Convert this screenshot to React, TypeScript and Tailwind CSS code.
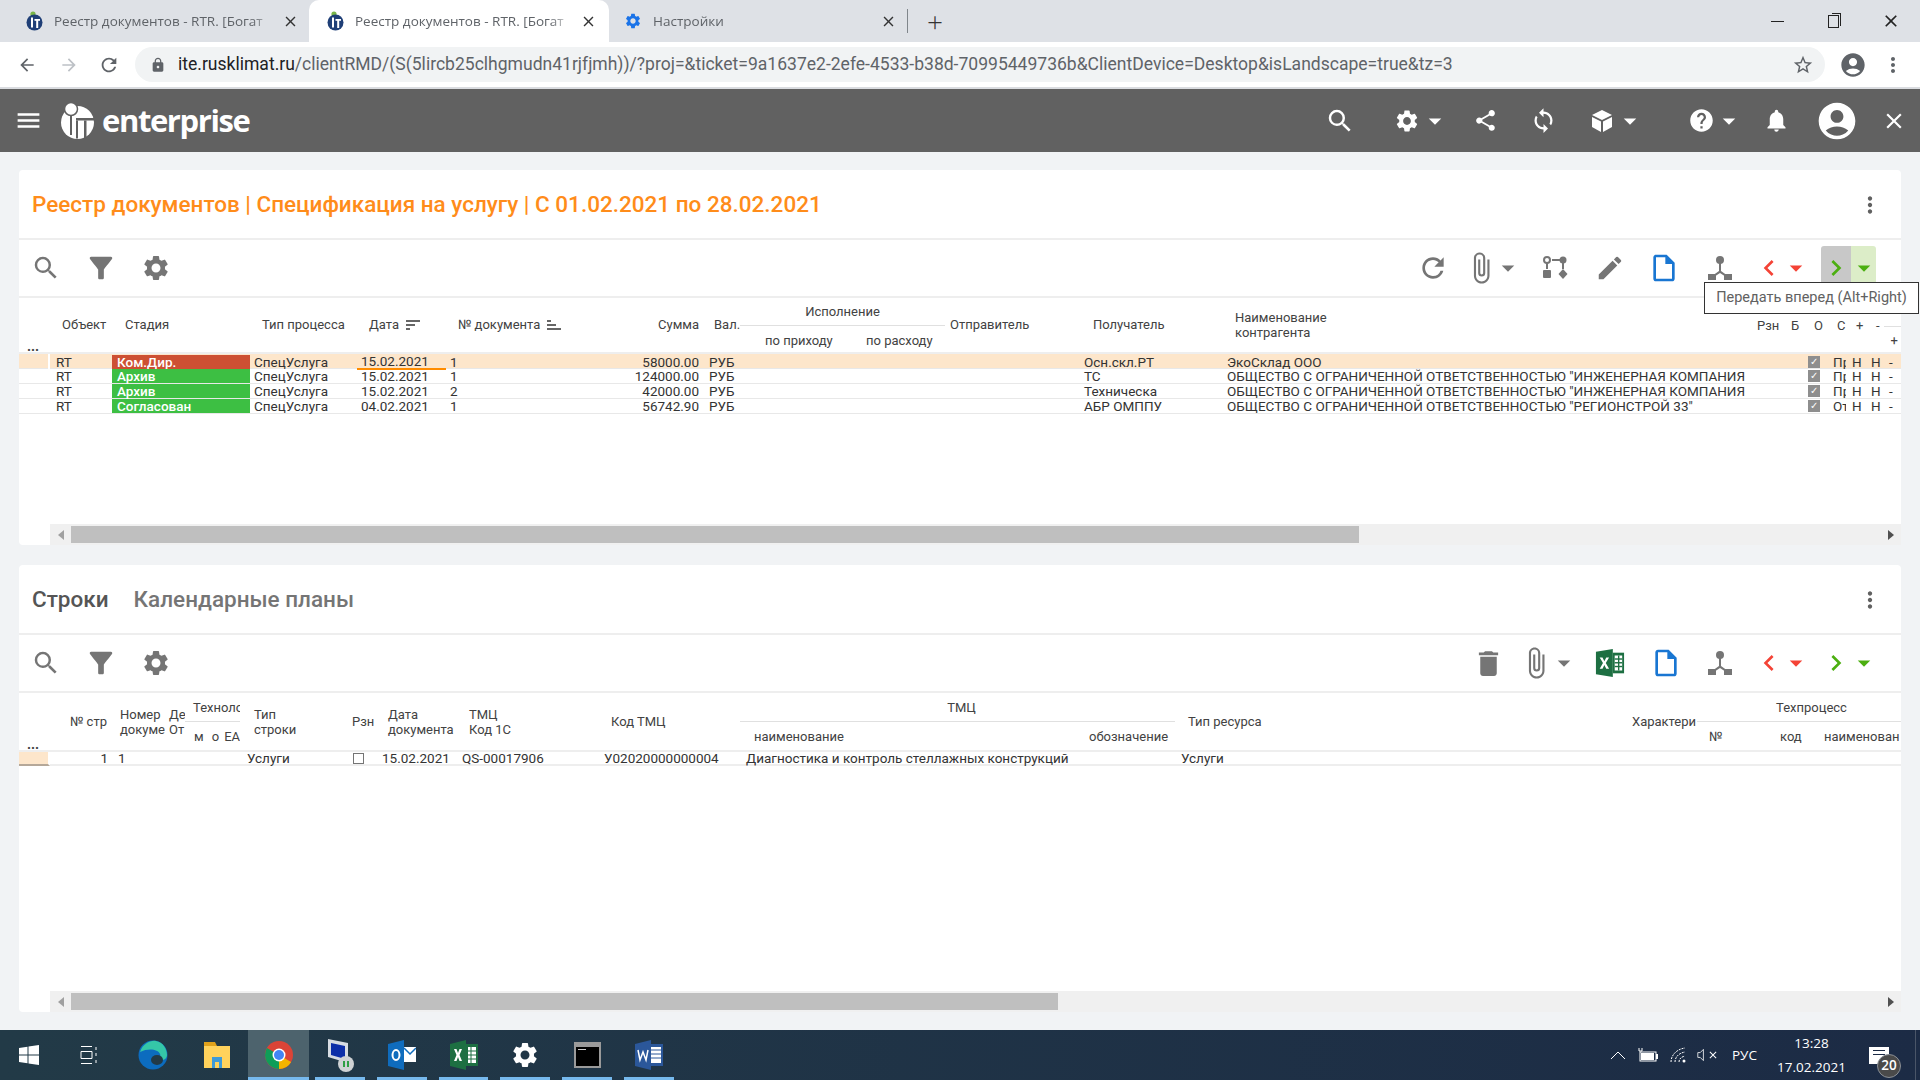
import type { ReactNode } from "react";
import {
  MdAccountCircle,
  MdArrowBack,
  MdArrowDropDown,
  MdArrowForward,
  MdAttachFile,
  MdChevronLeft,
  MdChevronRight,
  MdClose,
  MdDelete,
  MdEdit,
  MdFilterAlt,
  MdHelp,
  MdLock,
  MdMenu,
  MdMoreVert,
  MdNotifications,
  MdOutlineInsertDriveFile,
  MdRefresh,
  MdSearch,
  MdSettings,
  MdShare,
  MdStarBorder,
  MdSync,
} from "react-icons/md";

function Favicon() {
  return (
    <svg width="17" height="20" viewBox="0 0 17 20" className="shrink-0">
      <circle cx="7" cy="3" r="2.6" fill="#7ab648" />
      <ellipse cx="8.5" cy="11.5" rx="8" ry="8" fill="#1f3f77" />
      <rect x="5" y="6.5" width="2" height="10" fill="#fff" />
      <rect x="8.5" y="8" width="5.5" height="1.8" fill="#fff" />
      <rect x="10.2" y="8" width="2" height="9" fill="#fff" />
    </svg>
  );
}

function Tab({
  active,
  icon,
  title,
  className,
}: {
  active?: boolean;
  icon: ReactNode;
  title: string;
  className: string;
}) {
  return (
    <div
      className={`flex h-[42px] items-center ${className} ${
        active ? "rounded-t-[10px] bg-white" : ""
      }`}
    >
      {icon}
      <div className="ml-[11px] flex-1 overflow-hidden whitespace-nowrap text-[13.5px] text-[#5f6368] [mask-image:linear-gradient(to_right,black_90%,transparent)]">
        {title}
      </div>
      <MdClose className="ml-[8px] shrink-0 text-[#333]" size={17} />
    </div>
  );
}

function BrowserChrome() {
  return (
    <div className="shrink-0 font-['Open_Sans',sans-serif]">
      <div className="flex h-[42px] items-center bg-[#dee1e6]">
        <Tab
          className="ml-[26px] mr-[10px] w-[273px]"
          icon={<Favicon />}
          title="Реестр документов - RTR. [Богат"
        />
        <Tab
          active
          className="w-[300px] pl-[18px] pr-[12px]"
          icon={<Favicon />}
          title="Реестр документов - RTR. [Богат"
        />
        <Tab
          className="ml-[15px] w-[273px]"
          icon={<MdSettings className="shrink-0 text-[#1a73e8]" size={18} />}
          title="Настройки"
        />
        <div className="ml-[10px] h-[24px] w-px bg-[#80868b]" />
        <span className="ml-[19px] text-[28px] font-light leading-none text-[#333]">+</span>
        <div className="ml-auto flex items-center pr-[19px] text-[#222]">
          <div className="h-px w-[13px] bg-[#222]" />
          <div className="relative ml-[44px] h-[13px] w-[11px] border border-[#222]">
            <div className="absolute -right-[3px] -top-[3px] h-[13px] w-[9px] border-r border-t border-[#222]" />
          </div>
          <MdClose className="ml-[42px]" size={20} />
        </div>
      </div>
      <div className="flex h-[47px] items-center border-b-2 border-[#dadce0] bg-white">
        <MdArrowBack className="ml-[17px] shrink-0 text-[#5f6368]" size={20} />
        <MdArrowForward className="ml-[22px] shrink-0 text-[#bdc1c6]" size={20} />
        <MdRefresh className="ml-[19px] shrink-0 text-[#5f6368]" size={22} />
        <div className="ml-[15px] flex h-[35px] flex-1 items-center rounded-full bg-[#f1f3f4] font-['Roboto',sans-serif] text-[17.55px] text-[#5f6368]">
          <MdLock className="ml-[15px] shrink-0 text-[#5f6368]" size={16} />
          <div className="ml-[12px] flex-1 whitespace-nowrap">
            <span className="text-[#202124]">ite.rusklimat.ru</span>
            /clientRMD/(S(5lircb25clhgmudn41rjfjmh))/?proj=&amp;ticket=9a1637e2-2efe-4533-b38d-70995449736b&amp;ClientDevice=Desktop&amp;isLandscape=true&amp;tz=3
          </div>
          <MdStarBorder className="mr-[11px] shrink-0 text-[#5f6368]" size={22} />
        </div>
        <MdAccountCircle className="ml-[14px] shrink-0 text-[#5f6368]" size={28} />
        <MdMoreVert className="ml-[14px] mr-[15px] shrink-0 text-[#5f6368]" size={24} />
      </div>
    </div>
  );
}

function Caret({ className = "text-white" }: { className?: string }) {
  return (
    <div className="flex w-6 items-center justify-center">
      <MdArrowDropDown className={`shrink-0 ${className}`} size={30} />
    </div>
  );
}

function Box({ children, className = "" }: { children: ReactNode; className?: string }) {
  return (
    <div className={`flex w-6 items-center justify-center [&>svg]:shrink-0 ${className}`}>
      {children}
    </div>
  );
}

function CubeIcon() {
  return (
    <svg width="22" height="24" viewBox="0 0 22 24" fill="#fff">
      <path d="M11 1 21 6 11 11 1 6Z" />
      <path d="M1 8 10 12.5V23L1 18Z" />
      <path d="M21 8 12 12.5V23L21 18Z" />
    </svg>
  );
}

function HeaderBar() {
  return (
    <div className="flex h-[63px] shrink-0 items-center bg-[#616161] text-white">
      <MdMenu className="ml-[14px]" size={29} />
      <svg width="34" height="36" viewBox="0 0 34 36" className="ml-[18px]">
        <circle cx="16.500" cy="19.500" r="16.500" fill="#fff" />
        <circle cx="10" cy="6" r="6.500" fill="#fff" stroke="#616161" strokeWidth="1.500" />
        <rect x="9" y="13" width="2" height="19" fill="#616161" />
        <rect x="15" y="15" width="19" height="2.500" fill="#616161" />
        <rect x="15" y="17.500" width="2" height="18" fill="#616161" />
        <rect x="23" y="17.500" width="2.500" height="18" fill="#616161" />
      </svg>
      <span className="ml-[7px] font-['Open_Sans',sans-serif] text-[31px] font-bold leading-none tracking-[-1.4px]">
        enterprise
      </span>
      <div className="ml-auto flex items-center pr-[14px]">
        <Box>
          <MdSearch size={30} />
        </Box>
        <Box className="ml-[43px]">
          <MdSettings size={26} />
        </Box>
        <div className="ml-[4px]">
          <Caret />
        </div>
        <Box className="ml-[26px]">
          <MdShare size={25} />
        </Box>
        <Box className="ml-[34px]">
          <MdSync size={27} />
        </Box>
        <Box className="ml-[35px]">
          <CubeIcon />
        </Box>
        <div className="ml-[4px]">
          <Caret />
        </div>
        <Box className="ml-[47px]">
          <MdHelp size={27} />
        </Box>
        <div className="ml-[4px]">
          <Caret />
        </div>
        <Box className="ml-[23px]">
          <MdNotifications size={27} />
        </Box>
        <MdAccountCircle className="ml-[27px] shrink-0" size={44} />
        <Box className="ml-[23px]">
          <MdClose size={26} />
        </Box>
      </div>
    </div>
  );
}

function RouteIcon() {
  return (
    <svg width="26" height="24" viewBox="0 0 26 24" fill="#757575">
      <circle cx="5" cy="4" r="3" fill="none" stroke="#757575" strokeWidth="2" />
      <rect x="4" y="7" width="2" height="6" />
      <rect x="1" y="14" width="8" height="8" rx="1" />
      <circle cx="21" cy="4" r="3.5" />
      <rect x="10" y="3" width="9" height="2" />
      <rect x="20" y="7" width="2" height="6" />
      <path d="M21 13 25.5 18 21 23 16.5 18Z" />
    </svg>
  );
}

function HubIcon() {
  return (
    <svg width="26" height="26" viewBox="0 0 26 26" fill="#757575">
      <circle cx="13" cy="5" r="4" />
      <path d="M12 8h2v8l7 5-1.2 1.6L13 18l-6.8 4.6L5 21l7-5Z" />
      <rect x="1" y="19" width="8" height="6" />
      <rect x="17" y="19" width="8" height="6" />
    </svg>
  );
}

function ExcelIcon() {
  return (
    <svg width="30" height="30" viewBox="0 0 32 32">
      <path d="M1 4 19 1V31L1 28Z" fill="#1d6f42" />
      <rect x="19" y="5" width="12" height="22" fill="#1d6f42" />
      <rect x="21" y="8" width="8" height="16" fill="#fff" />
      <rect x="21" y="11" width="8" height="1.5" fill="#1d6f42" />
      <rect x="21" y="15" width="8" height="1.5" fill="#1d6f42" />
      <rect x="21" y="19" width="8" height="1.5" fill="#1d6f42" />
      <rect x="24.5" y="8" width="1.5" height="16" fill="#1d6f42" />
      <path d="M5 10h3l2 4 2-4h3l-3.5 6 3.5 6h-3l-2-4-2 4H5l3.5-6Z" fill="#fff" />
    </svg>
  );
}

function LeftTools() {
  return (
    <div className="-ml-px flex items-center text-[#757575]">
      <div className="flex w-[55px] justify-center">
        <MdSearch size={30} />
      </div>
      <div className="flex w-[55px] justify-center">
        <MdFilterAlt size={34} />
      </div>
      <div className="flex w-[55px] justify-center">
        <MdSettings size={30} />
      </div>
    </div>
  );
}

function StepTools({ hot }: { hot?: boolean }) {
  return (
    <>
      <Box className="ml-[25px]">
        <MdChevronLeft className="text-[#f44336]" size={32} />
      </Box>
      <div className="ml-[3px]">
        <Caret className="text-[#f44336]" />
      </div>
      <div
        className={`ml-[13px] flex h-[44px] w-[30px] items-center justify-center rounded-tl-[3px] ${
          hot ? "bg-[#c8c8c8]" : ""
        }`}
      >
        <MdChevronRight className="shrink-0 text-[#4caf10]" size={32} />
      </div>
      <div
        className={`flex h-[44px] w-[25px] items-center justify-center rounded-tr-[3px] ${
          hot ? "bg-[#dcedc8]" : ""
        }`}
      >
        <MdArrowDropDown className="shrink-0 text-[#4caf10]" size={30} />
      </div>
    </>
  );
}

function TopToolbar() {
  return (
    <div className="relative flex h-[58px] shrink-0 items-center justify-between border-b-2 border-[#eeeeee] pr-[25px]">
      <LeftTools />
      <div className="flex items-center text-[#757575]">
        <Box>
          <MdRefresh size={32} />
        </Box>
        <Box className="ml-[24px]">
          <MdAttachFile size={34} />
        </Box>
        <div className="ml-[3px]">
          <Caret className="text-[#757575]" />
        </div>
        <Box className="ml-[23px]">
          <RouteIcon />
        </Box>
        <Box className="ml-[31px]">
          <MdEdit size={30} />
        </Box>
        <Box className="ml-[30px]">
          <MdOutlineInsertDriveFile className="text-[#1976d2]" size={32} />
        </Box>
        <Box className="ml-[32px]">
          <HubIcon />
        </Box>
        <StepTools hot />
      </div>
      <div className="absolute -right-[18px] top-[42px] z-10 flex h-[32px] w-[215px] items-center justify-center whitespace-nowrap border border-[#333] bg-white text-[14.5px] text-[#616161]">
        Передать вперед (Alt+Right)
      </div>
    </div>
  );
}

function BottomToolbar() {
  return (
    <div className="flex h-[58px] shrink-0 items-center justify-between border-b-2 border-[#eeeeee] pr-[25px]">
      <LeftTools />
      <div className="flex items-center text-[#757575]">
        <Box>
          <MdDelete size={33} />
        </Box>
        <Box className="ml-[24px]">
          <MdAttachFile size={34} />
        </Box>
        <div className="ml-[4px]">
          <Caret className="text-[#757575]" />
        </div>
        <Box className="ml-[22px]">
          <ExcelIcon />
        </Box>
        <Box className="ml-[32px]">
          <MdOutlineInsertDriveFile className="text-[#1976d2]" size={32} />
        </Box>
        <Box className="ml-[30px]">
          <HubIcon />
        </Box>
        <StepTools />
      </div>
    </div>
  );
}

function SortIcon({ flip }: { flip?: boolean }) {
  return (
    <svg width="14" height="10" viewBox="0 0 14 10" fill="#666" className={`ml-[7px] shrink-0 ${flip ? "-scale-y-100" : ""}`}>
      <rect x="0" y="0" width="14" height="2" />
      <rect x="0" y="4" width="9" height="2" />
      <rect x="0" y="8" width="4" height="2" />
    </svg>
  );
}

const topHeadCols =
  "grid-cols-[31px_62px_138px_107px_89px_114px_144px_36px_100px_105px_135px_142px_528px_151px]";
const topRowCols =
  "grid-cols-[31px_62px_138px_107px_89px_114px_144px_36px_100px_105px_135px_142px_583px_25px_18px_19px_18px_16px]";

const docs = [
  { stage: "Ком.Дир.", color: "bg-[#cd5033]", date: "15.02.2021", no: "1", sum: "58000.00", to: "Осн.скл.РТ", name: "ЭкоСклад ООО", state: "Пр", sel: true },
  { stage: "Архив", color: "bg-[#3dbf43]", date: "15.02.2021", no: "1", sum: "124000.00", to: "ТС", name: 'ОБЩЕСТВО С ОГРАНИЧЕННОЙ ОТВЕТСТВЕННОСТЬЮ "ИНЖЕНЕРНАЯ КОМПАНИЯ', state: "Пр" },
  { stage: "Архив", color: "bg-[#3dbf43]", date: "15.02.2021", no: "2", sum: "42000.00", to: "Техническа", name: 'ОБЩЕСТВО С ОГРАНИЧЕННОЙ ОТВЕТСТВЕННОСТЬЮ "ИНЖЕНЕРНАЯ КОМПАНИЯ', state: "Пр" },
  { stage: "Согласован", color: "bg-[#3dbf43]", date: "04.02.2021", no: "1", sum: "56742.90", to: "АБР ОМППУ", name: 'ОБЩЕСТВО С ОГРАНИЧЕННОЙ ОТВЕТСТВЕННОСТЬЮ "РЕГИОНСТРОЙ 33"', state: "От" },
];

function Checked() {
  return (
    <div className="ml-[3px] flex h-[12px] w-[12px] items-center justify-center bg-[#8e8e8e] text-[10px] leading-none text-white">
      ✓
    </div>
  );
}

function TopTable() {
  return (
    <div className="flex-1 overflow-hidden">
      <div className={`grid h-[54px] grid-rows-[28px_26px] items-center whitespace-nowrap text-[13px] text-[#424242] ${topHeadCols}`}>
        <div className="row-span-2 self-end pb-[1px] pl-[8px] text-[14px] font-bold leading-[10px]">...</div>
        <div className="row-span-2 pl-3">Объект</div>
        <div className="row-span-2 pl-[13px]">Стадия</div>
        <div className="row-span-2 pl-3">Тип процесса</div>
        <div className="row-span-2 flex items-center pl-3">
          Дата
          <SortIcon />
        </div>
        <div className="row-span-2 flex items-center pl-3">
          № документа
          <SortIcon flip />
        </div>
        <div className="row-span-2 pr-[5px] text-right">Сумма</div>
        <div className="row-span-2 pl-[10px]">Вал.</div>
        <div className="col-span-2 flex h-full items-center justify-center border-b border-[#e0e0e0]">
          Исполнение
        </div>
        <div className="row-span-2 col-start-11 pl-[5px]">Отправитель</div>
        <div className="row-span-2 pl-[13px]">Получатель</div>
        <div className="row-span-2 pl-[13px] leading-[15px]">
          Наименование
          <br />
          контрагента
        </div>
        <div className="row-span-2 h-full pt-[20px]">
          <div className="flex h-[16px] items-center">
            <span className="ml-[7px] w-[34px]">Рзн</span>
            <span className="w-[23px]">Б</span>
            <span className="w-[23px]">О</span>
            <span className="w-[19px]">С</span>
            <span className="w-[20px]">+</span>
            <span>-</span>
            <div className="ml-[4px] h-px flex-1 bg-[#e0e0e0]" />
          </div>
          <div className="pr-[3px] text-right leading-[14px]">+</div>
        </div>
        <div className="col-start-9 pl-[25px] pt-[3px]">по приходу</div>
        <div className="pl-[26px] pt-[3px]">по расходу</div>
      </div>
      <div className="border-t-2 border-[#eeeeee] text-[13.5px] text-[#333]">
        {docs.map((d, i) => (
          <div
            key={i}
            className={`grid h-[15px] items-center whitespace-nowrap border-b border-[#e8e8e8] leading-[14px] ${topRowCols} ${
              d.sel ? "bg-[#fde6cb]" : ""
            }`}
          >
            <div className="h-full border-r-2 border-white" />
            <div className="pl-[6px]">RT</div>
            <div className={`h-[14px] pl-[5px] font-medium text-white ${d.color}`}>{d.stage}</div>
            <div className="pl-[4px]">СпецУслуга</div>
            <div className={`relative h-full pl-[4px] ${d.sel ? "border-b-2 border-[#ff8c00]" : ""}`}>{d.date}</div>
            <div className="pl-[4px]">{d.no}</div>
            <div className="pr-[5px] text-right">{d.sum}</div>
            <div className="pl-[5px]">РУБ</div>
            <div />
            <div />
            <div />
            <div className="pl-[4px]">{d.to}</div>
            <div className="pl-[5px]">{d.name}</div>
            <Checked />
            <div className="ml-[3px] w-[13px] overflow-hidden">{d.state}</div>
            <div className="pl-[4px]">Н</div>
            <div className="pl-[4px]">Н</div>
            <div className="pl-[4px]">-</div>
          </div>
        ))}
      </div>
    </div>
  );
}

const lineCols =
  "grid-cols-[31px_65px_50px_20px_55px_105px_35px_82px_134px_144px_340px_95px_455px_67px_73px_50px_81px]";

function BottomTable() {
  return (
    <div className="flex-1 overflow-hidden">
      <div className={`grid h-[57px] grid-rows-[29px_28px] items-center overflow-hidden whitespace-nowrap text-[13px] leading-[15px] text-[#424242] ${lineCols}`}>
        <div className="row-span-2 self-end pb-[1px] pl-[8px] text-[14px] font-bold leading-[10px]">...</div>
        <div className="row-span-2 pl-[20px]">№ стр</div>
        <div className="row-span-2 overflow-hidden pl-[5px]">
          Номер
          <br />
          докуме
        </div>
        <div className="row-span-2 overflow-hidden pl-[4px]">
          Де
          <br />
          От
        </div>
        <div className="flex h-full items-center overflow-hidden border-b border-[#e0e0e0] pl-[8px]">Технолог</div>
        <div className="row-span-2 pl-[14px]">
          Тип
          <br />
          строки
        </div>
        <div className="row-span-2 pl-[7px]">Рзн</div>
        <div className="row-span-2 pl-[8px]">
          Дата
          <br />
          документа
        </div>
        <div className="row-span-2 pl-[7px]">
          ТМЦ
          <br />
          Код 1С
        </div>
        <div className="row-span-2 pl-[15px]">Код ТМЦ</div>
        <div className="col-span-2 flex h-full items-center justify-center border-b border-[#e0e0e0] pl-[8px]">ТМЦ</div>
        <div className="row-span-2 pl-[13px]">Тип ресурса</div>
        <div className="row-span-2 overflow-hidden pl-[2px]">Характери</div>
        <div className="col-span-3 flex h-full items-center border-b border-[#e0e0e0] pl-[79px]">Техпроцесс</div>
        <div className="col-start-5 flex overflow-hidden pl-[9px]">
          <span className="w-[20px]">м</span>
          <span className="w-[14px]">о</span>
          <span>ЕА</span>
        </div>
        <div className="col-start-11 pl-[14px]">наименование</div>
        <div className="pl-[9px]">обозначение</div>
        <div className="col-start-15 pl-[12px]">№</div>
        <div className="pl-[10px]">код</div>
        <div className="overflow-hidden pl-[4px]">наименован</div>
      </div>
      <div
        className={`grid h-[16px] items-center whitespace-nowrap border-y-2 border-[#eeeeee] pb-[1px] text-[13.5px] leading-[12px] text-[#333] ${lineCols}`}
      >
        <div className="-mb-[3px] h-[14px] self-start border-b-2 border-r-2 border-b-[#b5a899] border-r-white bg-[#fde6cb]" />
        <div className="pr-[7px] text-right">1</div>
        <div className="pl-[3px]">1</div>
        <div />
        <div />
        <div className="pl-[7px]">Услуги</div>
        <div className="pl-[8px]">
          <div className="h-[11px] w-[11px] border border-[#757575]" />
        </div>
        <div className="pl-[2px]">15.02.2021</div>
        <div>QS-00017906</div>
        <div className="pl-[8px]">У02020000000004</div>
        <div className="pl-[6px]">Диагностика и контроль стеллажных конструкций</div>
        <div />
        <div className="pl-[6px]">Услуги</div>
      </div>
    </div>
  );
}

function HScroll({ thumb }: { thumb: string }) {
  return (
    <div className="ml-[31px] flex h-[21px] shrink-0 items-center bg-[#f0f0f0]">
      <div className="flex w-[21px] shrink-0 items-center justify-center">
        <div className="h-0 w-0 border-y-[5px] border-r-[6px] border-y-transparent border-r-[#a0a0a0]" />
      </div>
      <div className="min-w-0 flex-1">
        <div className={`h-[17px] bg-[#bfbfbf] ${thumb}`} />
      </div>
      <div className="flex w-[21px] shrink-0 items-center justify-center">
        <div className="h-0 w-0 border-y-[5px] border-l-[6px] border-y-transparent border-l-[#505050]" />
      </div>
    </div>
  );
}

function TitleRow({ children }: { children: ReactNode }) {
  return (
    <div className="flex h-[70px] shrink-0 items-center justify-between border-b-2 border-[#eeeeee] pl-[13px] pr-[18px] pt-[2px]">
      <div className="flex items-center">{children}</div>
      <MdMoreVert className="text-[#616161]" size={26} />
    </div>
  );
}

function Taskbar() {
  const slot = "relative flex h-full items-center justify-center";
  const line = <div className="absolute inset-x-[6px] bottom-0 h-[3px] bg-[#76b9ed]" />;
  return (
    <div className="flex h-[50px] shrink-0 items-center bg-gradient-to-r from-[#223a47] to-[#1c2b45] text-white">
      <div className={`${slot} w-[58px]`}>
        <svg width="20" height="20" viewBox="0 0 20 20" fill="#fff">
          <path d="M0 3 8.5 1.8V9.5H0ZM9.5 1.6 20 0V9.5H9.5ZM0 10.5H8.5V18.2L0 17ZM9.5 10.5H20V20L9.5 18.4Z" />
        </svg>
      </div>
      <div className={`${slot} w-[62px]`}>
        <svg width="20" height="20" viewBox="0 0 20 20" fill="none" stroke="#fff" strokeWidth="1">
          <path d="M2 1.5H13M2 18.5H13M2 6.5H13V13.5H2ZM17 2V5M17 8V11M17 15V18" />
        </svg>
      </div>
      <div className={`${slot} w-[66px]`}>
        <svg width="30" height="30" viewBox="0 0 30 30">
          <circle cx="15" cy="15" r="14.5" fill="#0c6cbf" />
          <path d="M2 12C5 3 13 0 18 1c7 1 11 8 11 14 0 5-6 6-10 5 3-1 4-4 3-6-2-5-12-6-20-2Z" fill="#35c7a8" />
          <ellipse cx="19" cy="20" rx="6" ry="5" fill="#223a47" />
        </svg>
      </div>
      <div className={`${slot} w-[62px]`}>
        <svg width="28" height="26" viewBox="0 0 28 26">
          <rect x="1" y="4" width="26" height="22" fill="#ffd25c" />
          <path d="M1 0H12L14 4H1Z" fill="#e0a11b" />
          <rect x="9" y="15" width="10" height="11" fill="#3e9ad8" />
          <rect x="12" y="20" width="4" height="6" fill="#ffd25c" />
        </svg>
      </div>
      <div className={`${slot} w-[61px] bg-[#4d636d]`}>
        <svg width="28" height="28" viewBox="0 0 28 28">
          <circle cx="14" cy="14" r="14" fill="#db4437" />
          <path d="M14 14 26.1 21A14 14 0 0 1 14 28Z" fill="#f4b400" />
          <path d="M14 14 14 28A14 14 0 0 1 1.9 7Z" fill="#0f9d58" />
          <circle cx="14" cy="14" r="6.5" fill="#fff" />
          <circle cx="14" cy="14" r="5" fill="#4285f4" />
        </svg>
        <div className="absolute inset-x-0 bottom-0 h-[3px] bg-[#76b9ed]" />
      </div>
      <div className={`${slot} w-[62px]`}>
        <svg width="30" height="36" viewBox="0 0 30 36">
          <path d="M3 2 23 6V26L3 20Z" fill="#d7dce2" />
          <path d="M6 6 20 9V22L6 18Z" fill="#0d2fa8" />
          <circle cx="21" cy="27" r="8" fill="#cfd2d4" />
          <path d="M19 24v6M23 24v6" stroke="#2f9e44" strokeWidth="2" />
        </svg>
        {line}
      </div>
      <div className={`${slot} w-[62px]`}>
        <svg width="28" height="30" viewBox="0 0 28 30">
          <path d="M0 4 16 0V30L0 26Z" fill="#0f6cbd" />
          <rect x="16" y="7" width="12" height="15" fill="#fff" />
          <path d="M16 8 22 14 28 8" fill="none" stroke="#0f6cbd" strokeWidth="1.5" />
          <ellipse cx="8" cy="15" rx="3.5" ry="5" fill="none" stroke="#fff" strokeWidth="2" />
        </svg>
        {line}
      </div>
      <div className={`${slot} w-[61px]`}>
        <svg width="28" height="30" viewBox="0 0 28 30">
          <path d="M0 4 16 0V30L0 26Z" fill="#1d6f42" />
          <rect x="16" y="4" width="12" height="22" fill="#1d6f42" />
          <rect x="18" y="7" width="8" height="16" fill="#fff" />
          <path d="M21 7V23M18 11H26M18 15H26M18 19H26" stroke="#1d6f42" />
          <path d="M4 9h2.5L8 13l1.5-4H12l-2.5 6 2.5 6H9.500L8 17l-1.500 4H4l2.500-6Z" fill="#fff" />
        </svg>
        {line}
      </div>
      <div className={`${slot} w-[62px]`}>
        <MdSettings size={30} />
        {line}
      </div>
      <div className={`${slot} w-[62px]`}>
        <div className="h-[26px] w-[27px] border-2 border-[#9a9a9a] border-t-[5px] bg-black">
          <div className="ml-[2px] mt-[2px] h-px w-[8px] bg-[#ccc]" />
        </div>
        {line}
      </div>
      <div className={`${slot} w-[62px]`}>
        <svg width="28" height="30" viewBox="0 0 28 30">
          <rect x="14" y="4" width="14" height="22" fill="#2b579a" />
          <rect x="16" y="7" width="10" height="16" fill="#fff" />
          <path d="M16 10H26M16 14H26M16 18H26" stroke="#2b579a" />
          <path d="M0 4 16 0V30L0 26Z" fill="#2b579a" />
          <path d="M3 10 5 20 8 12 11 20 13 10" fill="none" stroke="#fff" strokeWidth="1.5" />
        </svg>
        {line}
      </div>
      <div className="ml-auto flex h-full items-center pr-[4px] font-['Open_Sans',sans-serif]">
        <svg width="16" height="10" viewBox="0 0 16 10" fill="none" stroke="#fff" strokeWidth="1">
          <path d="M1 9 8 2 15 9" />
        </svg>
        <svg width="20" height="14" viewBox="0 0 20 14" className="ml-[12px]">
          <rect x="2" y="4" width="16" height="9" fill="none" stroke="#fff" />
          <rect x="3" y="5" width="13" height="7" fill="#fff" />
          <rect x="18" y="6" width="2" height="5" fill="#fff" />
          <path d="M1 0V3H4V0" fill="none" stroke="#fff" />
        </svg>
        <svg width="16" height="16" viewBox="0 0 16 16" fill="none" stroke="#fff" className="ml-[12px]">
          <path d="M1 15C1 8 7 2 15 1M5 15C5 10 9 6 15 5M9 15C9 12 11 10 15 9" strokeDasharray="2 1" />
          <circle cx="14" cy="14" r="1.500" fill="#fff" stroke="none" />
        </svg>
        <div className="ml-[11px] flex w-[22px] items-center text-[14px] leading-none">
          <svg width="10" height="16" viewBox="0 0 10 16" fill="none" stroke="#fff">
            <path d="M1 5H4L8 1V15L4 11H1Z" />
          </svg>
          <MdClose size={12} className="ml-[2px] shrink-0" />
        </div>
        <span className="ml-[13px] w-[27px] whitespace-nowrap text-[13.5px]">РУС</span>
        <div className="ml-[19px] flex w-[67px] flex-col items-center whitespace-nowrap text-[13.5px] leading-[24px]">
          <span>13:28</span>
          <span>17.02.2021</span>
        </div>
        <div className="relative ml-[24px] mr-[26px] h-[17px] w-[20px] bg-white">
          <div className="ml-[4px] mt-[3px] h-px w-[12px] bg-[#1c2b45]" />
          <div className="ml-[4px] mt-[3px] h-px w-[12px] bg-[#1c2b45]" />
          <div className="absolute -bottom-[14px] -right-[12px] flex h-[24px] w-[24px] items-center justify-center rounded-full border border-[#8a8f96] bg-[#4a4a4a] text-[13.5px] font-semibold">
            20
          </div>
        </div>
        <div className="h-full w-px bg-[#4a5568]" />
      </div>
    </div>
  );
}

export default function App() {
  return (
    <div className="flex h-[1080px] w-[1920px] flex-col overflow-hidden bg-[#f1f3f5] font-['Roboto',sans-serif]">
      <BrowserChrome />
      <HeaderBar />
      <div className="flex min-h-0 flex-1 flex-col gap-[20px] px-[19px] pb-[18px] pt-[18px]">
        <section className="flex h-[375px] shrink-0 flex-col rounded-[4px] bg-white">
          <TitleRow>
            <h1 className="text-[22.5px] font-medium text-[#ff8c1a]">
              Реестр документов | Спецификация на услугу | С 01.02.2021 по 28.02.2021
            </h1>
          </TitleRow>
          <TopToolbar />
          <TopTable />
          <HScroll thumb="w-[1288px]" />
        </section>
        <section className="flex min-h-0 flex-1 flex-col rounded-[4px] bg-white">
          <TitleRow>
            <span className="text-[22.5px] font-medium text-[#555]">Строки</span>
            <span className="ml-[25px] text-[22.5px] font-medium text-[#757575]">Календарные планы</span>
          </TitleRow>
          <BottomToolbar />
          <BottomTable />
          <HScroll thumb="w-[987px]" />
        </section>
      </div>
      <Taskbar />
    </div>
  );
}
